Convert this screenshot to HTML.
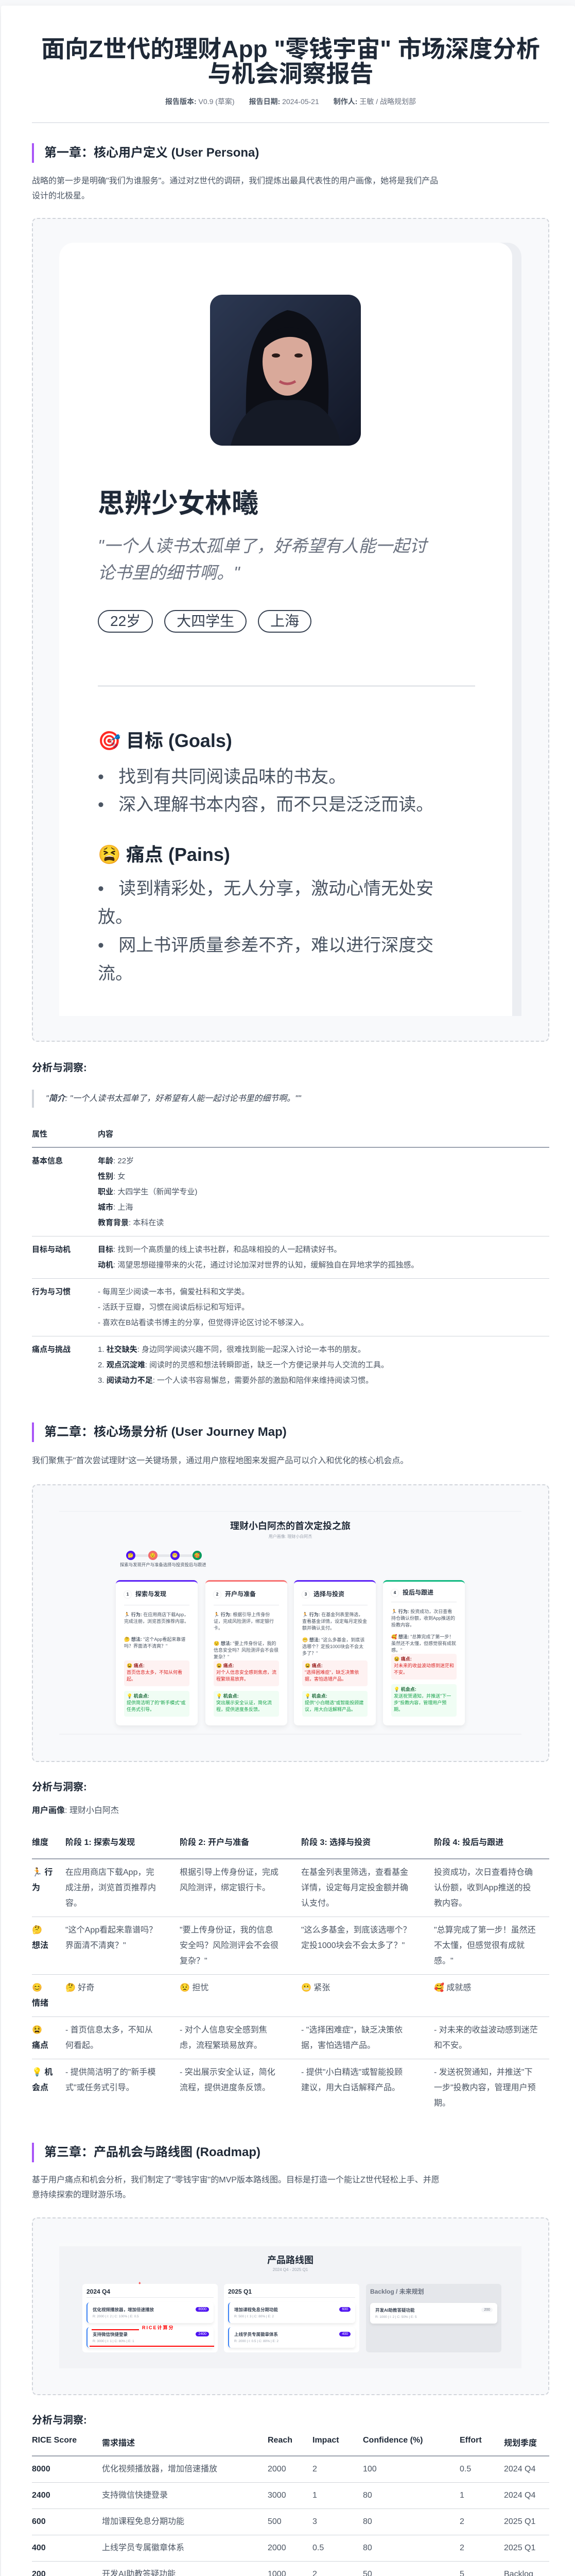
<!DOCTYPE html>
<html lang="zh-CN"><head><meta charset="utf-8">
<style>
*{margin:0;padding:0;box-sizing:border-box}
html,body{width:1117px;height:5175px;overflow:hidden}
body{background:#f7f8fa;font-family:"Liberation Sans","Noto Sans CJK SC",sans-serif;color:#374151;position:relative}
.a{position:absolute}
.outer{left:2px;top:11px;width:1115px;height:5132px;background:#fff;box-shadow:0 6px 18px rgba(0,0,0,.08);border-radius:4px}
.title{left:62px;width:1005px;top:71px;text-align:center;font-size:46px;line-height:48px;font-weight:700;color:#1f2937}
.meta{left:62px;width:1005px;top:188px;text-align:center;font-size:14px;line-height:18px;color:#6b7280}
.meta b{color:#4b5563}
.meta span{margin:0 14px}
.hr{left:62px;width:1005px;height:2px;background:#e5e7eb}
.h2{left:62px;border-left:4px solid #a855f7;padding-left:20px;font-size:24px;font-weight:700;color:#1f2937;height:38px;line-height:38px;white-space:nowrap}
.p{left:62px;width:1005px;font-size:16px;line-height:29px;color:#4b5563;white-space:nowrap}
.dash{left:62px;width:1005px;border:2px dashed #d1d5db;border-radius:10px;background:#f8f9fb}
.h3{left:62px;font-size:20px;line-height:26px;font-weight:700;color:#1f2937}
table{border-collapse:collapse;font-size:15px;color:#4b5563;table-layout:fixed}
th{text-align:left;font-weight:700;color:#1f2937;vertical-align:top}
td{vertical-align:top;line-height:30px}
td b{color:#1f2937}
.t1 th{height:41px;padding-top:4px;border-bottom:2px solid #9ca3af}
.t1 td{padding:11px 8px 10px 0;border-bottom:1px solid #d1d5db}
.jc{position:absolute;top:3067px;width:159px;height:282px;background:#fff;border-radius:8px;box-shadow:0 4px 10px rgba(0,0,0,.07);padding:0 16px;font-size:9px;line-height:13px;color:#4b5563;display:flex;flex-direction:column;overflow:hidden}
.jc .hd{display:flex;align-items:center;height:42px;margin-top:4px;border-bottom:1px solid #e5e7eb;font-size:12px;font-weight:700;color:#1f2937}
.jc .n{width:14px;height:14px;border-radius:50%;background:#fff;box-shadow:0 0 2px rgba(0,0,0,.15);font-size:8px;text-align:center;line-height:14px;margin-right:8px}
.jc .bh{margin-top:12px}
.jc .th{margin-top:22px}
.pain{margin-top:auto;background:#fef2f2;color:#dc2626;border-radius:4px;padding:4px 5px 6px;min-height:50px}
.pain b{color:#991b1b}
.opp{margin-top:9px;margin-bottom:17px;background:#f0fdf4;color:#16a34a;border-radius:4px;padding:4px 5px 6px;min-height:50px}
.opp b{color:#166534}
.t2 th{padding-top:3px;height:49px;border-bottom:2px solid #9ca3af;font-size:16px}
.t2 td{padding:11px 0 10px 0;border-bottom:1px solid #d1d5db;font-size:16px;white-space:nowrap}
.t3 th{height:47px;border-bottom:2px solid #9ca3af;font-size:16px;padding-top:8px}
.t3 td{height:51px;border-bottom:1px solid #d1d5db;font-size:16px;vertical-align:middle}
.t3 tr:last-child td{border-bottom:none}
.rcol{position:absolute;top:4433px;width:263px;height:133px;background:#fff;border-radius:6px;padding:0 8px}
.rcol .hd{font-size:12px;font-weight:700;color:#1f2937;height:27px;line-height:30px;border-bottom:1px solid #e5e7eb}
.ri{position:relative;height:40px;margin-top:9px;background:#fff;border-radius:6px;border-left:2px solid #3b82f6;box-shadow:0 3px 6px rgba(0,0,0,.08);padding:8px 10px}
.ri .tt{font-size:8.5px;font-weight:700;color:#374151}
.ri .mm{font-size:6.5px;color:#9ca3af;margin-top:4px}
.ri .bd{position:absolute;right:9px;top:9px;background:#4f14f0;color:#fff;font-size:7px;border-radius:6px;padding:1px 5px}
</style></head><body>
<div class="a outer"></div>

<div class="a title">面向Z世代的理财App "零钱宇宙" 市场深度分析<br>与机会洞察报告</div>
<div class="a meta"><span><b>报告版本:</b> V0.9 (草案)</span><span><b>报告日期:</b> 2024-05-21</span><span><b>制作人:</b> 王敏 / 战略规划部</span></div>
<div class="a hr" style="top:237px"></div>

<div class="a h2" style="top:278px">第一章：核心用户定义 (User Persona)</div>
<div class="a p" style="top:337px">战略的第一步是明确"我们为谁服务"。通过对Z世代的调研，我们提炼出最具代表性的用户画像，她将是我们产品<br>设计的北极星。</div>

<div class="a dash" style="top:423px;height:1599px"></div>
<div class="a" style="left:115px;top:471px;width:898px;height:1501px;background:#eceef2;border-radius:28px 28px 0 0"></div>
<div class="a" style="left:115px;top:471px;width:880px;height:1501px;background:#fff;border-radius:28px 28px 0 0"></div>
<svg class="a" style="left:408px;top:572px;border-radius:24px" width="293" height="293" viewBox="0 0 293 293">
<defs><linearGradient id="bg" x1="0" y1="0" x2="1" y2="1"><stop offset="0" stop-color="#2c3852"/><stop offset="1" stop-color="#121726"/></linearGradient></defs>
<rect width="293" height="293" fill="url(#bg)"/>
<path d="M70 293 C70 170 60 60 150 30 C240 40 235 170 225 293 Z" fill="#0d0f16"/>
<ellipse cx="150" cy="130" rx="48" ry="66" fill="#d9a99a"/>
<path d="M95 120 C100 50 200 40 205 115 C190 70 120 70 95 120Z" fill="#0d0f16"/>
<ellipse cx="128" cy="118" rx="8" ry="4" fill="#2a1b18"/><ellipse cx="172" cy="118" rx="8" ry="4" fill="#2a1b18"/>
<path d="M135 168 Q150 178 166 168" stroke="#b4505e" stroke-width="5" fill="none"/>
<path d="M40 293 C60 220 100 200 150 205 C200 200 240 220 255 293Z" fill="#151a26"/>
</svg>
<div class="a" style="left:190px;top:948px;font-size:52px;line-height:60px;font-weight:700;color:#1f2937">思辨少女林曦</div>
<div class="a" style="left:190px;top:1034px;width:760px;font-size:33px;line-height:52px;font-style:italic;color:#6b7280;white-space:nowrap">"一个人读书太孤单了，好希望有人能一起讨<br>论书里的细节啊。"</div>
<div class="a" style="left:190px;top:1184px;display:flex;gap:22px">
<span style="border:2px solid #374151;border-radius:22px;height:44px;line-height:40px;padding:0 22px;font-size:28px;color:#374151">22岁</span>
<span style="border:2px solid #374151;border-radius:22px;height:44px;line-height:40px;padding:0 22px;font-size:28px;color:#374151">大四学生</span>
<span style="border:2px solid #374151;border-radius:22px;height:44px;line-height:40px;padding:0 22px;font-size:28px;color:#374151">上海</span>
</div>
<div class="a" style="left:190px;top:1330px;width:733px;height:3px;background:#e5e7eb"></div>
<div class="a" style="left:190px;top:1414px;font-size:36px;line-height:48px;font-weight:700;color:#1f2937">🎯 目标 (Goals)</div>
<div class="a" style="left:190px;top:1481px;width:760px;font-size:34px;line-height:54px;color:#4b5563;white-space:nowrap">•&nbsp;&nbsp;&nbsp;找到有共同阅读品味的书友。<br>•&nbsp;&nbsp;&nbsp;深入理解书本内容，而不只是泛泛而读。</div>
<div class="a" style="left:190px;top:1635px;font-size:36px;line-height:48px;font-weight:700;color:#1f2937">😫 痛点 (Pains)</div>
<div class="a" style="left:190px;top:1698px;width:760px;font-size:34px;line-height:55px;color:#4b5563;white-space:nowrap">•&nbsp;&nbsp;&nbsp;读到精彩处，无人分享，激动心情无处安<br>放。<br>•&nbsp;&nbsp;&nbsp;网上书评质量参差不齐，难以进行深度交<br>流。</div>

<div class="a h3" style="top:2060px">分析与洞察:</div>
<div class="a" style="left:62px;top:2115px;height:35px;border-left:4px solid #d1d5db;padding-left:23px;font-size:16px;line-height:35px;font-style:italic;color:#374151;white-space:nowrap">"<b>简介</b>: "一个人读书太孤单了，好希望有人能一起讨论书里的细节啊。""</div>

<table class="a t1" style="left:62px;top:2186px;width:1005px">
<tr><th style="width:128px">属性</th><th>内容</th></tr>
<tr><td><b>基本信息</b></td><td><b>年龄</b>: 22岁<br><b>性别</b>: 女<br><b>职业</b>: 大四学生（新闻学专业)<br><b>城市</b>: 上海<br><b>教育背景</b>: 本科在读</td></tr>
<tr><td><b>目标与动机</b></td><td><b>目标</b>: 找到一个高质量的线上读书社群，和品味相投的人一起精读好书。<br><b>动机</b>: 渴望思想碰撞带来的火花，通过讨论加深对世界的认知，缓解独自在异地求学的孤独感。</td></tr>
<tr><td><b>行为与习惯</b></td><td>- 每周至少阅读一本书，偏爱社科和文学类。<br>- 活跃于豆瓣，习惯在阅读后标记和写短评。<br>- 喜欢在B站看读书博主的分享，但觉得评论区讨论不够深入。</td></tr>
<tr><td style="border-bottom:none"><b>痛点与挑战</b></td><td style="border-bottom:none">1. <b>社交缺失</b>: 身边同学阅读兴趣不同，很难找到能一起深入讨论一本书的朋友。<br>2. <b>观点沉淀难</b>: 阅读时的灵感和想法转瞬即逝，缺乏一个方便记录并与人交流的工具。<br>3. <b>阅读动力不足</b>: 一个人读书容易懈怠，需要外部的激励和陪伴来维持阅读习惯。</td></tr>
</table>

<div class="a h2" style="top:2761px">第二章：核心场景分析 (User Journey Map)</div>
<div class="a p" style="top:2821px">我们聚焦于"首次尝试理财"这一关键场景，通过用户旅程地图来发掘产品可以介入和优化的核心机会点。</div>

<div class="a dash" style="top:2881px;height:539px"></div>
<div class="a" style="left:115px;top:2933px;width:898px;height:434px;background:#f8f9fb;border-top:1px solid #eceef2;border-bottom:2px solid #f0f1f4"></div>
<div class="a" style="left:115px;width:898px;top:2951px;text-align:center;font-size:18px;line-height:22px;font-weight:700;color:#1f2937">理财小白阿杰的首次定投之旅</div>
<div class="a" style="left:115px;width:898px;top:2977px;text-align:center;font-size:8px;line-height:12px;color:#9ca3af">用户画像: 理财小白阿杰</div>
<div class="a" style="left:254px;top:3017px;width:130px;height:5px;background:#e5e7eb"></div>
<div class="a" style="left:245px;top:3010px;width:18px;height:18px;border-radius:50%;background:#4f14f0;font-size:9px;text-align:center;line-height:18px">🤔</div>
<div class="a" style="left:288px;top:3010px;width:18px;height:18px;border-radius:50%;background:#f26b6b;font-size:9px;text-align:center;line-height:18px">😟</div>
<div class="a" style="left:331px;top:3010px;width:18px;height:18px;border-radius:50%;background:#4f14f0;font-size:9px;text-align:center;line-height:18px">😬</div>
<div class="a" style="left:374px;top:3010px;width:18px;height:18px;border-radius:50%;background:#0a9a5c;font-size:9px;text-align:center;line-height:18px">🥰</div>
<div class="a" style="left:233px;top:3031px;font-size:8.4px;line-height:12px;color:#4b5563;white-space:nowrap">探索与发现开户与准备选择与投资投后与跟进</div>

<div class="jc" style="left:225px;border-top:3px solid #5b21f6"><div class="hd"><span class="n">1</span>探索与发现</div>
<div class="bh">🏃 <b>行为:</b> 在应用商店下载App，完成注册，浏览首页推荐内容。</div>
<div class="th">🤔 <b>想法:</b> "这个App看起来靠谱吗？界面清不清爽？"</div>
<div class="pain">😫 <b>痛点:</b><br>首页信息太多，不知从何看起。</div>
<div class="opp">💡 <b>机会点:</b><br>提供简洁明了的"新手模式"或任务式引导。</div></div>

<div class="jc" style="left:399px;border-top:3px solid #f87171"><div class="hd"><span class="n">2</span>开户与准备</div>
<div class="bh">🏃 <b>行为:</b> 根据引导上传身份证，完成风险测评，绑定银行卡。</div>
<div class="th" style="margin-top:17px">😟 <b>想法:</b> "要上传身份证，我的信息安全吗？风险测评会不会很复杂？"</div>
<div class="pain">😫 <b>痛点:</b><br>对个人信息安全感到焦虑，流程繁琐易放弃。</div>
<div class="opp">💡 <b>机会点:</b><br>突出展示安全认证，简化流程，提供进度条反馈。</div></div>

<div class="jc" style="left:571px;border-top:3px solid #5b21f6"><div class="hd"><span class="n">3</span>选择与投资</div>
<div class="bh">🏃 <b>行为:</b> 在基金列表里筛选，查看基金详情，设定每月定投金额并确认支付。</div>
<div class="th" style="margin-top:10px">😬 <b>想法:</b> "这么多基金，到底该选哪个？定投1000块会不会太多了？"</div>
<div class="pain">😫 <b>痛点:</b><br>"选择困难症"，缺乏决策依据，害怕选错产品。</div>
<div class="opp">💡 <b>机会点:</b><br>提供"小白精选"或智能投顾建议，用大白话解释产品。</div></div>

<div class="jc" style="left:744px;border-top:3px solid #10b981"><div class="hd"><span class="n">4</span>投后与跟进</div>
<div class="bh">🏃 <b>行为:</b> 投资成功，次日查看持仓确认份额，收到App推送的投教内容。</div>
<div class="th" style="margin-top:10px">🥰 <b>想法:</b> "总算完成了第一步！虽然还不太懂，但感觉很有成就感。"</div>
<div class="pain" style="margin-top:auto">😫 <b>痛点:</b><br>对未来的收益波动感到迷茫和不安。</div>
<div class="opp" style="min-height:63px">💡 <b>机会点:</b><br>发送祝贺通知，并推送"下一步"投教内容，管理用户预期。</div></div>

<div class="a h3" style="top:3456px">分析与洞察:</div>
<div class="a" style="left:62px;top:3501px;font-size:16px;line-height:28px;color:#4b5563"><b style="color:#1f2937">用户画像</b>: 理财小白阿杰</div>

<table class="a t2" style="left:62px;top:3559px;width:1005px">
<tr><th style="width:65px">维度</th><th style="width:222px">阶段 1: 探索与发现</th><th style="width:236px">阶段 2: 开户与准备</th><th style="width:258px">阶段 3: 选择与投资</th><th>阶段 4: 投后与跟进</th></tr>
<tr><td><b>🏃 行<br>为</b></td><td>在应用商店下载App，完<br>成注册，浏览首页推荐内<br>容。</td><td>根据引导上传身份证，完成<br>风险测评，绑定银行卡。</td><td>在基金列表里筛选，查看基金<br>详情，设定每月定投金额并确<br>认支付。</td><td>投资成功，次日查看持仓确<br>认份额，收到App推送的投<br>教内容。</td></tr>
<tr><td><b>🤔<br>想法</b></td><td>"这个App看起来靠谱吗？<br>界面清不清爽？"</td><td>"要上传身份证，我的信息<br>安全吗？风险测评会不会很<br>复杂？"</td><td>"这么多基金，到底该选哪个？<br>定投1000块会不会太多了？"</td><td>"总算完成了第一步！虽然还<br>不太懂，但感觉很有成就<br>感。"</td></tr>
<tr><td><b>😊<br>情绪</b></td><td>🤔 好奇</td><td>😟 担忧</td><td>😬 紧张</td><td>🥰 成就感</td></tr>
<tr><td><b>😫<br>痛点</b></td><td>- 首页信息太多，不知从<br>何看起。</td><td>- 对个人信息安全感到焦<br>虑，流程繁琐易放弃。</td><td>- "选择困难症"，缺乏决策依<br>据，害怕选错产品。</td><td>- 对未来的收益波动感到迷茫<br>和不安。</td></tr>
<tr><td style="border-bottom:none"><b>💡 机<br>会点</b></td><td style="border-bottom:none">- 提供简洁明了的"新手模<br>式"或任务式引导。</td><td style="border-bottom:none">- 突出展示安全认证，简化<br>流程，提供进度条反馈。</td><td style="border-bottom:none">- 提供"小白精选"或智能投顾<br>建议，用大白话解释产品。</td><td style="border-bottom:none">- 发送祝贺通知，并推送"下<br>一步"投教内容，管理用户预<br>期。</td></tr>
</table>

<div class="a h2" style="top:4159px">第三章：产品机会与路线图 (Roadmap)</div>
<div class="a p" style="top:4217px">基于用户痛点和机会分析，我们制定了"零钱宇宙"的MVP版本路线图。目标是打造一个能让Z世代轻松上手、并愿<br>意持续探索的理财游乐场。</div>

<div class="a dash" style="top:4304px;height:345px"></div>
<div class="a" style="left:115px;top:4353px;width:898px;height:244px;background:#f2f3f6;border-top:7px solid #f9fafb"></div>
<div class="a" style="left:115px;width:898px;top:4376px;text-align:center;font-size:18px;line-height:22px;font-weight:700;color:#1f2937">产品路线图</div>
<div class="a" style="left:115px;width:898px;top:4400px;text-align:center;font-size:8px;line-height:12px;color:#9ca3af">2024 Q4 - 2025 Q1</div>
<div class="rcol" style="left:160px"><div class="hd">2024 Q4</div>
<div class="ri"><div class="tt">优化视频播放器，增加倍速播放</div><div class="mm">R: 2000 | I: 2 | C: 100% | E: 0.5</div><span class="bd">8000</span></div>
<div class="ri" style="margin-top:8px"><div class="tt">支持微信快捷登录</div><div class="mm">R: 3000 | I: 1 | C: 80% | E: 1</div><span class="bd">2400</span></div></div>
<div class="rcol" style="left:435px"><div class="hd">2025 Q1</div>
<div class="ri"><div class="tt">增加课程免息分期功能</div><div class="mm">R: 500 | I: 3 | C: 80% | E: 2</div><span class="bd">600</span></div>
<div class="ri" style="margin-top:8px"><div class="tt">上线学员专属徽章体系</div><div class="mm">R: 2000 | I: 0.5 | C: 80% | E: 2</div><span class="bd">400</span></div></div>
<div class="rcol" style="left:711px;background:#e5e7eb"><div class="hd" style="color:#6b7280;border-bottom:none">Backlog / 未来规划</div>
<div class="ri" style="margin-top:10px;border-left:none"><div class="tt">开发AI助教答疑功能</div><div class="mm">R: 1000 | I: 2 | C: 50% | E: 5</div><span class="bd" style="background:#f3f4f6;color:#6b7280">200</span></div></div>
<div class="a" style="left:178px;top:4521px;width:92px;height:2px;background:#f00"></div>
<div class="a" style="left:276px;top:4511px;font-size:9px;font-weight:700;color:#f00;letter-spacing:2px">RICE计算分</div>
<div class="a" style="left:174px;top:4553px;width:242px;height:2px;background:#f00"></div>
<div class="a" style="left:269px;top:4427px;font-size:8px;color:#f00;font-weight:700">+</div>

<div class="a h3" style="top:4685px">分析与洞察:</div>
<table class="a t3" style="left:62px;top:4720px;width:1005px">
<tr><th style="width:136px">RICE Score</th><th style="width:322px">需求描述</th><th style="width:87px">Reach</th><th style="width:98px">Impact</th><th style="width:188px">Confidence (%)</th><th style="width:86px">Effort</th><th>规划季度</th></tr>
<tr><td><b>8000</b></td><td>优化视频播放器，增加倍速播放</td><td>2000</td><td>2</td><td>100</td><td>0.5</td><td>2024 Q4</td></tr>
<tr><td><b>2400</b></td><td>支持微信快捷登录</td><td>3000</td><td>1</td><td>80</td><td>1</td><td>2024 Q4</td></tr>
<tr><td><b>600</b></td><td>增加课程免息分期功能</td><td>500</td><td>3</td><td>80</td><td>2</td><td>2025 Q1</td></tr>
<tr><td><b>400</b></td><td>上线学员专属徽章体系</td><td>2000</td><td>0.5</td><td>80</td><td>2</td><td>2025 Q1</td></tr>
<tr><td><b>200</b></td><td>开发AI助教答疑功能</td><td>1000</td><td>2</td><td>50</td><td>5</td><td>Backlog</td></tr>
</table>
</body></html>
